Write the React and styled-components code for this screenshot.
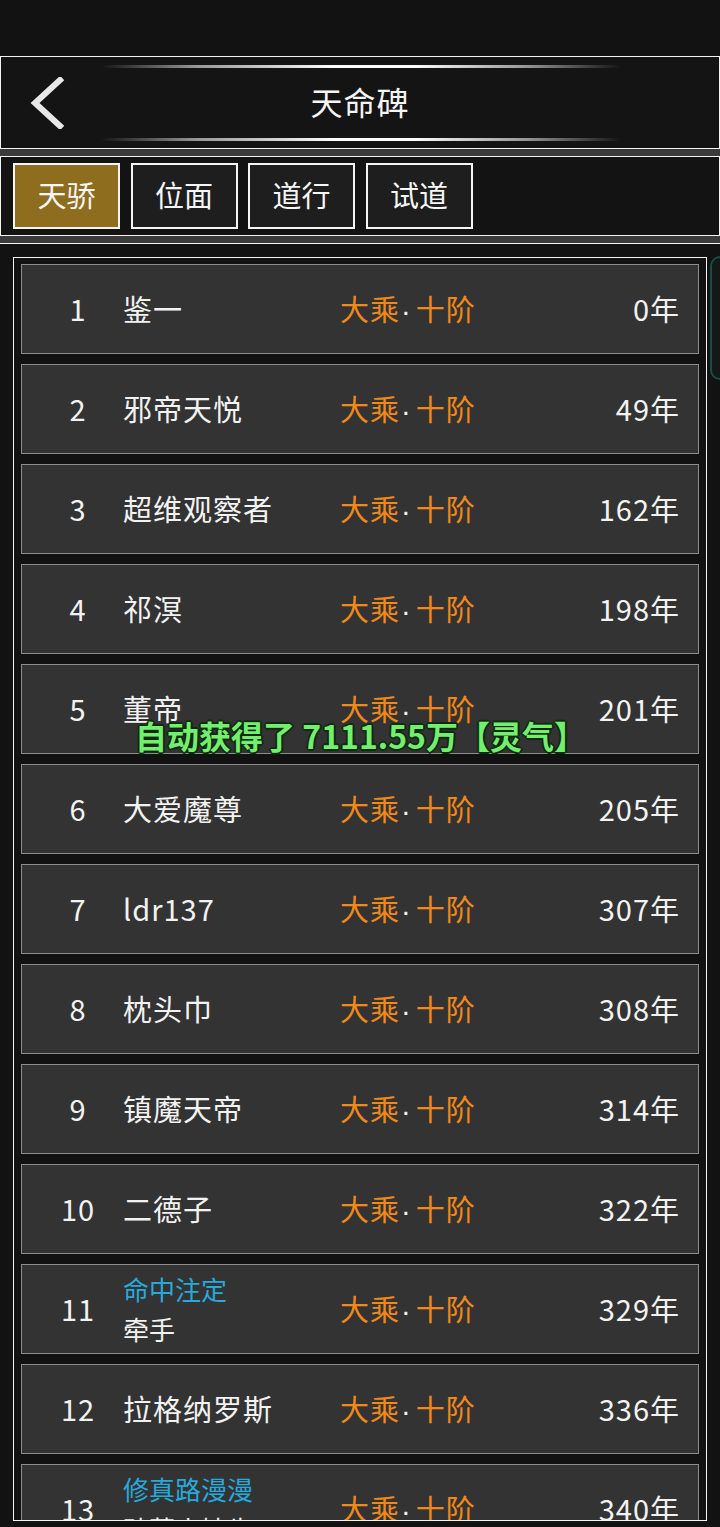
import React from 'react';
import styled, { createGlobalStyle } from 'styled-components';

const GlobalStyle = createGlobalStyle`
  html, body {
    margin: 0;
    padding: 0;
    background: #121212;
  }
  body {
    font-family: "Noto Sans CJK SC", "Noto Sans", sans-serif;
  }
`;

const Page = styled.div`
  position: relative;
  width: 720px;
  height: 1527px;
  background: #121212;
  display: flex;
  flex-direction: column;
  overflow: hidden;
`;

const StatusBar = styled.div`
  height: 56px;
  flex-shrink: 0;
`;

const Header = styled.div`
  position: relative;
  height: 93px;
  box-sizing: border-box;
  border: 1px solid #f2f2f2;
  background: #141414;
  display: flex;
  align-items: center;
  justify-content: center;
  padding-bottom: 4px;
  flex-shrink: 0;

  &::before,
  &::after {
    content: '';
    position: absolute;
    left: 100px;
    width: 520px;
    height: 3px;
    background: linear-gradient(
      90deg,
      rgba(255, 255, 255, 0) 0%,
      rgba(255, 255, 255, 0.55) 18%,
      #ffffff 45%,
      #ffffff 60%,
      rgba(255, 255, 255, 0.55) 82%,
      rgba(255, 255, 255, 0) 100%
    );
  }
  &::before {
    top: 8px;
  }
  &::after {
    bottom: 7px;
  }
`;

const BackButton = styled.button`
  position: absolute;
  left: 26px;
  top: 20px;
  width: 44px;
  height: 52px;
  padding: 0;
  border: none;
  background: transparent;
  cursor: pointer;
`;

const Title = styled.h1`
  margin: 0;
  font-size: 32px;
  font-weight: 400;
  color: #f4f4f4;
  letter-spacing: 1px;
`;

const Divider = styled.div`
  height: 7px;
  background: #3a3a3a;
  flex-shrink: 0;
`;

const TabBar = styled.div`
  height: 80px;
  box-sizing: border-box;
  border: 1px solid #f2f2f2;
  background: #131313;
  display: flex;
  align-items: flex-start;
  gap: 10.5px;
  padding: 6px 12px 0;
  flex-shrink: 0;
`;

const Tab = styled.button`
  width: 107px;
  height: 66px;
  box-sizing: border-box;
  border: 2px solid #f4f4f4;
  background: ${(p) => (p.$active ? '#8f6d1f' : '#1e1e1e')};
  color: #f6f6f6;
  font-family: inherit;
  font-size: 29px;
  padding: 0 0 5px;
  cursor: pointer;
`;

const Content = styled.div`
  flex: 1;
  border-top: 1px solid #f2f2f2;
  padding: 13px 13px 0;
`;

const ListPanel = styled.div`
  height: 1264px;
  box-sizing: border-box;
  border: 1px solid #f2f2f2;
  padding: 6px 7px 0;
  display: flex;
  flex-direction: column;
  gap: 10px;
  overflow: hidden;
`;

const Row = styled.div`
  height: 90px;
  flex-shrink: 0;
  box-sizing: border-box;
  background: #333333;
  border: 1px solid #8c8c8c;
  display: flex;
  align-items: center;
  padding: 0 18px 3px 11px;
  color: #f2f2f2;
  font-size: 29px;
  letter-spacing: 1px;
`;

const Rank = styled.div`
  width: 90px;
  text-align: center;
  flex-shrink: 0;
`;

const NameCell = styled.div`
  width: 217px;
  flex-shrink: 0;
  display: flex;
  flex-direction: column;
  line-height: 40px;
  font-size: ${(p) => (p.$stacked ? '26px' : '29px')};
  letter-spacing: ${(p) => (p.$stacked ? '0' : '1px')};
  margin-top: ${(p) => (p.$stacked ? '3px' : '0')};
`;

const Honor = styled.span`
  color: #27a9dc;
`;

const Realm = styled.div`
  color: #f0891a;
  white-space: nowrap;
  flex-shrink: 0;
`;

const Dot = styled.span`
  font-family: "Liberation Sans", sans-serif;
  color: #f2f2f2;
  margin: 0 4px 0 1px;
`;

const Years = styled.div`
  flex: 1;
  text-align: right;
`;

const Toast = styled.div`
  position: absolute;
  left: 135px;
  top: 712px;
  font-size: 32px;
  font-weight: 700;
  color: #74ee6e;
  white-space: nowrap;
  text-shadow:
    -2px 0 #0f2a10, 2px 0 #0f2a10, 0 -2px #0f2a10, 0 2px #0f2a10,
    -1px -1px #0f2a10, 1px 1px #0f2a10, -1px 1px #0f2a10, 1px -1px #0f2a10;
`;

const SideTab = styled.div`
  position: absolute;
  left: 710px;
  top: 256px;
  width: 30px;
  height: 124px;
  box-sizing: border-box;
  border: 2px solid #1d4a44;
  border-radius: 10px;
  background: #141817;
`;

const tabs = ['天骄', '位面', '道行', '试道'];

const ranks = [
  { name: '鉴一', years: 0 },
  { name: '邪帝天悦', years: 49 },
  { name: '超维观察者', years: 162 },
  { name: '祁溟', years: 198 },
  { name: '董帝', years: 201 },
  { name: '大爱魔尊', years: 205 },
  { name: 'ldr137', years: 307 },
  { name: '枕头巾', years: 308 },
  { name: '镇魔天帝', years: 314 },
  { name: '二德子', years: 322 },
  { name: '牵手', honor: '命中注定', years: 329 },
  { name: '拉格纳罗斯', years: 336 },
  { name: '孙莫小娃牛', honor: '修真路漫漫', years: 340 },
];

const BackIcon = () => (
  <svg width="44" height="52" viewBox="0 0 44 52">
    <polyline
      points="33,3 8,26 33,49"
      fill="none"
      stroke="#e8e8e8"
      strokeWidth="6"
      strokeLinecap="square"
    />
  </svg>
);

export default function App() {
  return (
    <>
      <GlobalStyle />
      <Page>
        <StatusBar />
        <Header>
          <BackButton aria-label="返回">
            <BackIcon />
          </BackButton>
          <Title>天命碑</Title>
        </Header>
        <Divider />
        <TabBar>
          {tabs.map((t, i) => (
            <Tab key={t} $active={i === 0}>
              {t}
            </Tab>
          ))}
        </TabBar>
        <Divider />
        <Content>
          <ListPanel>
            {ranks.map((r, i) => (
              <Row key={i}>
                <Rank>{i + 1}</Rank>
                <NameCell $stacked={!!r.honor}>
                  {r.honor && <Honor>{r.honor}</Honor>}
                  <span>{r.name}</span>
                </NameCell>
                <Realm>
                  大乘<Dot>·</Dot>十阶
                </Realm>
                <Years>{r.years}年</Years>
              </Row>
            ))}
          </ListPanel>
        </Content>
        <SideTab />
        <Toast>自动获得了 7111.55万【灵气】</Toast>
      </Page>
    </>
  );
}
